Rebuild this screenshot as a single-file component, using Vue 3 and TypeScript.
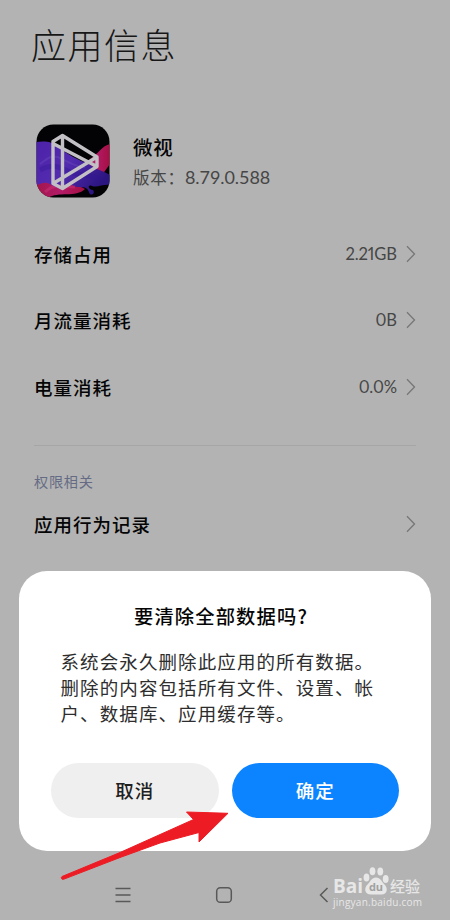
<script setup lang="ts">
interface UsageRow {
  label: string
  value: string
}

const usageRows: UsageRow[] = [
  { label: '存储占用', value: '2.21GB' },
  { label: '月流量消耗', value: '0B' },
  { label: '电量消耗', value: '0.0%' },
]

const messageLines: string[] = [
  '系统会永久删除此应用的所有数据。',
  '删除的内容包括所有文件、设置、帐',
  '户、数据库、应用缓存等。',
]
</script>

<template>
  <div class="screen">
    <main class="page">
      <h1 class="page-title">应用信息</h1>

      <section class="app">
        <svg class="app-icon" viewBox="0 0 74 74">
          <defs>
            <clipPath id="icon-shape"><rect x="0.5" y="0.5" width="73" height="73" rx="17" /></clipPath>
            <linearGradient id="violet" x1="0" y1="0" x2="1" y2="0.6">
              <stop offset="0" stop-color="#4c22a8" />
              <stop offset="0.5" stop-color="#532bb0" />
              <stop offset="1" stop-color="#2b1580" />
            </linearGradient>
            <linearGradient id="rose" x1="0" y1="0" x2="1" y2="0">
              <stop offset="0" stop-color="#a3164c" />
              <stop offset="0.5" stop-color="#b31b68" />
              <stop offset="1" stop-color="#a50f42" />
            </linearGradient>
          </defs>
          <g clip-path="url(#icon-shape)">
            <rect width="74" height="74" fill="#030305" />
            <path d="M74 20C66 22 63 29 54 35L46 47L66 51L74 40Z" fill="url(#rose)" />
            <path d="M0 56C12 52 22 57 34 57L49 65C40 74 22 67 12 74H0Z" fill="url(#rose)" />
            <path d="M0 18C8 17 16 17 22 23C31 30 42 36 53 40C60 46 68 47 74 51V61C67 60 61 64 56 62C51 60 52 66 57 66C60 70 54 73 53 68C50 60 44 66 36 61C27 65 21 65 14 60C8 57 5 60 0 61Z" fill="url(#violet)" />
            <path d="M4 40C13 33 17 30 26 35C34 39 40 43 49 43" fill="none" stroke="#7154bd" stroke-width="2" opacity="0.35" />
            <path d="M4 46C17 39 24 43 34 48C45 52 53 50 64 55" fill="none" stroke="#311491" stroke-width="5" opacity="0.35" />
            <path d="M9 68C20 58 29 63 39 63" fill="none" stroke="#d13b83" stroke-width="3" opacity="0.4" />
          </g>
          <path d="M17 18L26.5 12L61 33.5V43L26.5 65L17 60ZM26.5 12V65M17 20L61 43M17 60L61 33.5" transform="translate(0 -0.5)" fill="none" stroke="#c2c0c4" stroke-width="3.4" stroke-linejoin="round" />
        </svg>
        <div class="app-text">
          <div class="app-name">微视</div>
          <div class="app-version"><span>版本：</span><span class="version-number">8.79.0.588</span></div>
        </div>
      </section>

      <ul class="rows">
        <li v-for="row in usageRows" :key="row.label" class="row">
          <span class="row-label">{{ row.label }}</span>
          <span class="row-value">{{ row.value }}</span>
          <svg class="chevron" viewBox="0 0 10 18"><path d="M1 1.3L8.5 9L1 16.7" /></svg>
        </li>
      </ul>

      <hr class="divider" />
      <h2 class="group-title">权限相关</h2>
      <div class="row record">
        <span class="row-label">应用行为记录</span>
        <svg class="chevron" viewBox="0 0 10 18"><path d="M1 1.3L8.5 9L1 16.7" /></svg>
      </div>
    </main>

    <nav class="nav">
      <svg class="nav-icon" viewBox="0 0 18 18"><path d="M1.5 2.5H16.5M1.5 9H16.5M1.5 15.5H16.5" /></svg>
      <svg class="nav-icon" viewBox="0 0 18 18"><rect x="1.7" y="1.7" width="14.6" height="14.6" rx="3.6" /></svg>
      <svg class="nav-icon" viewBox="0 0 18 18"><path d="M12.5 2L5.5 9L12.5 16" /></svg>
    </nav>

    <section class="dialog">
      <h3 class="dialog-title">要清除全部数据吗?</h3>
      <p class="dialog-message">
        <span v-for="line in messageLines" :key="line" class="line">{{ line }}</span>
      </p>
      <div class="actions">
        <button class="button">取消</button>
        <button class="button primary">确定</button>
      </div>
    </section>

    <svg class="arrow" viewBox="0 0 170 72">
      <path d="M2 65.5L60 41.5L133.5 8.5L126.5 1L168 2.3L139 31V21.5L100 32L60 46.5L3.5 68.3A1.6 1.6 0 0 1 2 65.5Z" />
    </svg>

    <div class="watermark">
      <div class="brand">
        <span class="brand-latin">Bai</span>
        <svg class="paw" viewBox="0 0 26 28">
          <ellipse cx="3.5" cy="10.5" rx="2.9" ry="4" />
          <ellipse cx="9.5" cy="4.3" rx="2.9" ry="4" />
          <ellipse cx="17.3" cy="4.6" rx="2.9" ry="4" />
          <ellipse cx="22.7" cy="12" rx="2.9" ry="4" />
          <path d="M13 10.5C17.5 10.5 18.5 14.5 21 17C25.5 21 24.5 27.5 18.5 27.5H8C1.500 27.500 0.500 21 5 17C7.500 14.500 8.500 10.500 13 10.500Z" />
          <text x="13" y="24.3" text-anchor="middle">du</text>
        </svg>
        <span class="brand-cn">经验</span>
      </div>
      <div class="site">jingyan.baidu.com</div>
    </div>
  </div>
</template>

<style>
body {
  margin: 0;
}
</style>

<style scoped>
.screen {
  position: relative;
  display: flex;
  flex-direction: column;
  width: 450px;
  height: 920px;
  overflow: hidden;
  background: #b3b3b3;
  color: #050505;
  font-family: "Noto Sans CJK SC", sans-serif;
}

.page {
  display: flex;
  flex: 1;
  flex-direction: column;
  padding: 18.5px 34px 0;
}

.page-title {
  margin: 0 0 0 -3px;
  color: #171717;
  font-size: 35px;
  font-weight: 300;
  line-height: 50px;
  letter-spacing: 1.5px;
}

.app {
  display: flex;
  gap: 23.5px;
  height: 74px;
  margin: 55px 0 0 1.5px;
}

.app-icon {
  flex: none;
  width: 74px;
  height: 74px;
}

.app-text {
  padding-top: 8px;
}

.app-name {
  font-size: 19.5px;
  font-weight: 500;
  line-height: 30px;
  letter-spacing: 0.8px;
}

.app-version {
  display: flex;
  color: #464646;
  font-size: 16.5px;
  line-height: 30px;
  letter-spacing: 0.8px;
}

.version-number {
  font-family: Lato, sans-serif;
  font-size: 18px;
  letter-spacing: -0.05px;
}

.rows {
  margin: 23px 0 0;
  padding: 0;
  list-style: none;
}

.row {
  display: flex;
  align-items: center;
  height: 66.5px;
}

.row-label {
  flex: 1;
  font-size: 18.5px;
  font-weight: 500;
  letter-spacing: 1px;
}

.row-value {
  color: #464646;
  font-family: Lato, sans-serif;
  font-size: 16.6px;
  font-feature-settings: "pnum";
  letter-spacing: -0.1px;
}

.chevron {
  width: 10px;
  height: 18px;
  margin-left: 9px;
}

.chevron path {
  fill: none;
  stroke: #777;
  stroke-width: 1.3;
}

.divider {
  width: 100%;
  height: 1px;
  margin: 24.5px 0 0;
  border: 0;
  background: #a6a6a6;
}

.group-title {
  margin: 24px 0 0;
  color: #656b84;
  font-size: 14.2px;
  font-weight: 400;
  line-height: 22px;
  letter-spacing: 0.7px;
}

.record {
  height: 65.5px;
}

.nav {
  display: flex;
  align-items: center;
  justify-content: space-between;
  height: 50px;
  padding: 0 117px 0 114px;
}

.nav-icon {
  width: 18px;
  height: 18px;
  fill: none;
  stroke: #595959;
  stroke-width: 1.5;
}

.dialog {
  position: absolute;
  top: 570.5px;
  left: 19px;
  box-sizing: border-box;
  width: 412px;
  height: 280px;
  padding: 30.5px 32px 32px;
  border-radius: 28px;
  background: #fff;
}

.dialog-title {
  margin: 0 8px 0 0;
  font-size: 19.3px;
  font-weight: 500;
  line-height: 30px;
  letter-spacing: 1.15px;
  text-align: center;
}

.dialog-message {
  margin: 16.5px 0 0 9.5px;
  color: #2d2d2d;
  font-size: 18.5px;
  line-height: 26px;
  letter-spacing: 1.1px;
}

.line {
  display: block;
  white-space: nowrap;
}

.actions {
  display: flex;
  gap: 13px;
  margin-top: 37.5px;
}

.button {
  flex: 1;
  height: 55px;
  padding: 0 0 1px;
  border: 0;
  border-radius: 28px;
  background: #efefef;
  color: #202020;
  font-family: inherit;
  font-size: 18.5px;
  font-weight: 500;
  letter-spacing: 1px;
}

.primary {
  background: #0d84ff;
  color: #fff;
}

.arrow {
  position: absolute;
  top: 811px;
  left: 60px;
  width: 170px;
  height: 72px;
  fill: #ed1c24;
  stroke: #ed1c24;
  stroke-width: 1;
  stroke-linejoin: round;
}

.watermark {
  position: absolute;
  top: 866px;
  left: 333px;
  width: 92px;
  color: #e7e7e7;
}

.brand {
  display: flex;
  align-items: flex-end;
  height: 29px;
}

.brand-latin {
  width: 29px;
  font-family: "Open Sans", sans-serif;
  font-size: 19px;
  font-weight: 700;
  line-height: 18px;
}

.paw {
  width: 26px;
  height: 28px;
  margin-left: 1px;
  fill: #e7e7e7;
}

.paw text {
  fill: #a0a0a0;
  font-family: "Open Sans", sans-serif;
  font-size: 11px;
  font-weight: 700;
}

.brand-cn {
  margin-left: 1px;
  font-size: 15px;
  font-weight: 500;
  line-height: 18px;
}

.site {
  font-family: "Open Sans", sans-serif;
  font-size: 10px;
  line-height: 14px;
  letter-spacing: 0.25px;
}
</style>
